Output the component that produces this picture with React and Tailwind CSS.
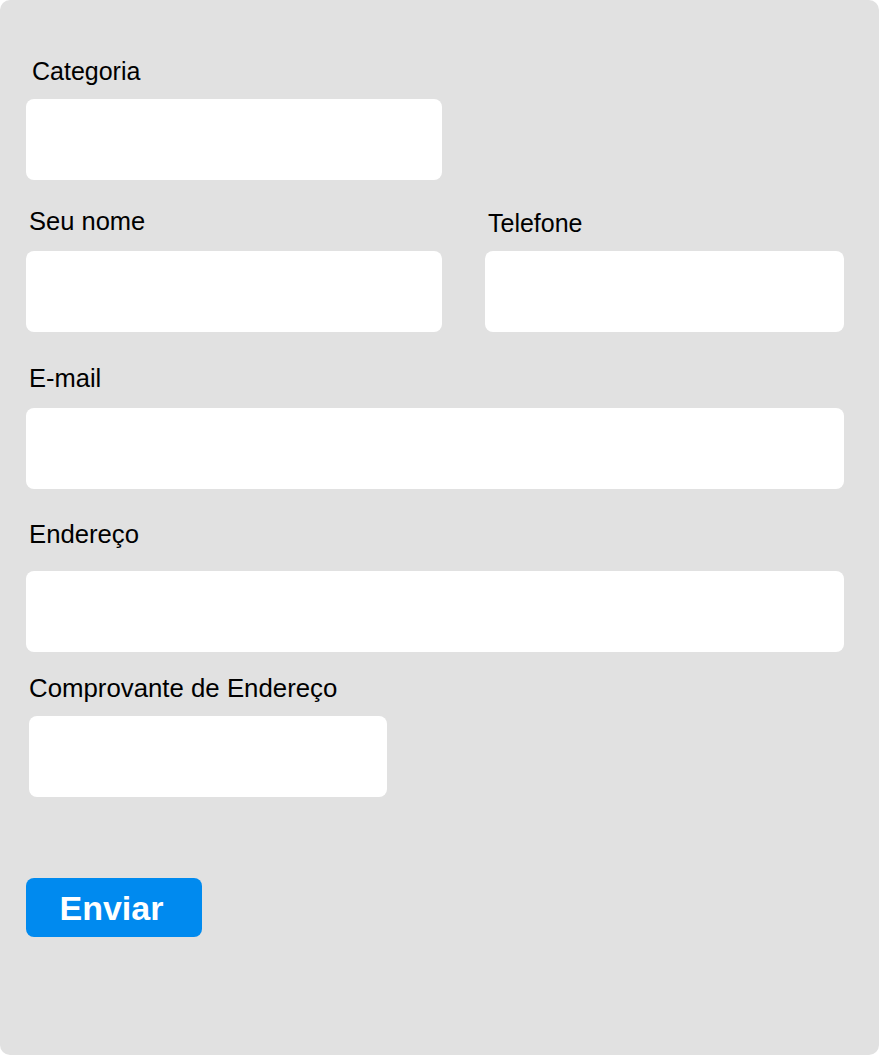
export default function App() {
  const font = { fontFamily: '"Liberation Sans", Arial, Helvetica, sans-serif' };
  const label = "leading-[29px] text-black";
  const input = "h-[81px] bg-white rounded-[8px]";
  return (
    <div style={font} className="w-[879px] h-[1055px] bg-[#e1e1e1] rounded-[10px] pt-[57px] flex flex-col">
      {/* Categoria */}
      <div className="pl-[32px]">
        <div className={`${label} text-[25px]`}>Categoria</div>
      </div>
      <div className={`${input} mt-[13px] ml-[26px] w-[416px]`}></div>

      {/* Seu nome / Telefone */}
      <div className="flex mt-[27px] ml-[26px]">
        <div className="w-[416px] flex flex-col">
          <div className={`${label} text-[25.5px] pl-[3px]`}>Seu nome</div>
          <div className={`${input} mt-[15px]`}></div>
        </div>
        <div className="w-[359px] ml-[43px] flex flex-col">
          <div className={`${label} text-[25px] pl-[3px] mt-[2px]`}>Telefone</div>
          <div className={`${input} mt-[13px]`}></div>
        </div>
      </div>

      {/* E-mail */}
      <div className={`${label} text-[25.5px] mt-[32px] pl-[29px]`}>E-mail</div>
      <div className={`${input} mt-[15px] ml-[26px] w-[818px]`}></div>

      {/* Endereço */}
      <div className={`${label} text-[25.7px] mt-[31px] pl-[29px]`}>Endereço</div>
      <div className={`${input} mt-[22px] ml-[26px] w-[818px]`}></div>

      {/* Comprovante */}
      <div className={`${label} text-[25.8px] mt-[22px] pl-[29px]`}>Comprovante de Endereço</div>
      <div className={`${input} mt-[13px] ml-[29px] w-[358px]`}></div>

      <div className="mt-[81px] ml-[26px]">
        <button className="w-[176px] h-[59px] rounded-[8px] bg-[#008aef] text-white font-bold text-[34px] leading-none flex items-center justify-center pr-[5px]">
          Enviar
        </button>
      </div>
    </div>
  );
}
